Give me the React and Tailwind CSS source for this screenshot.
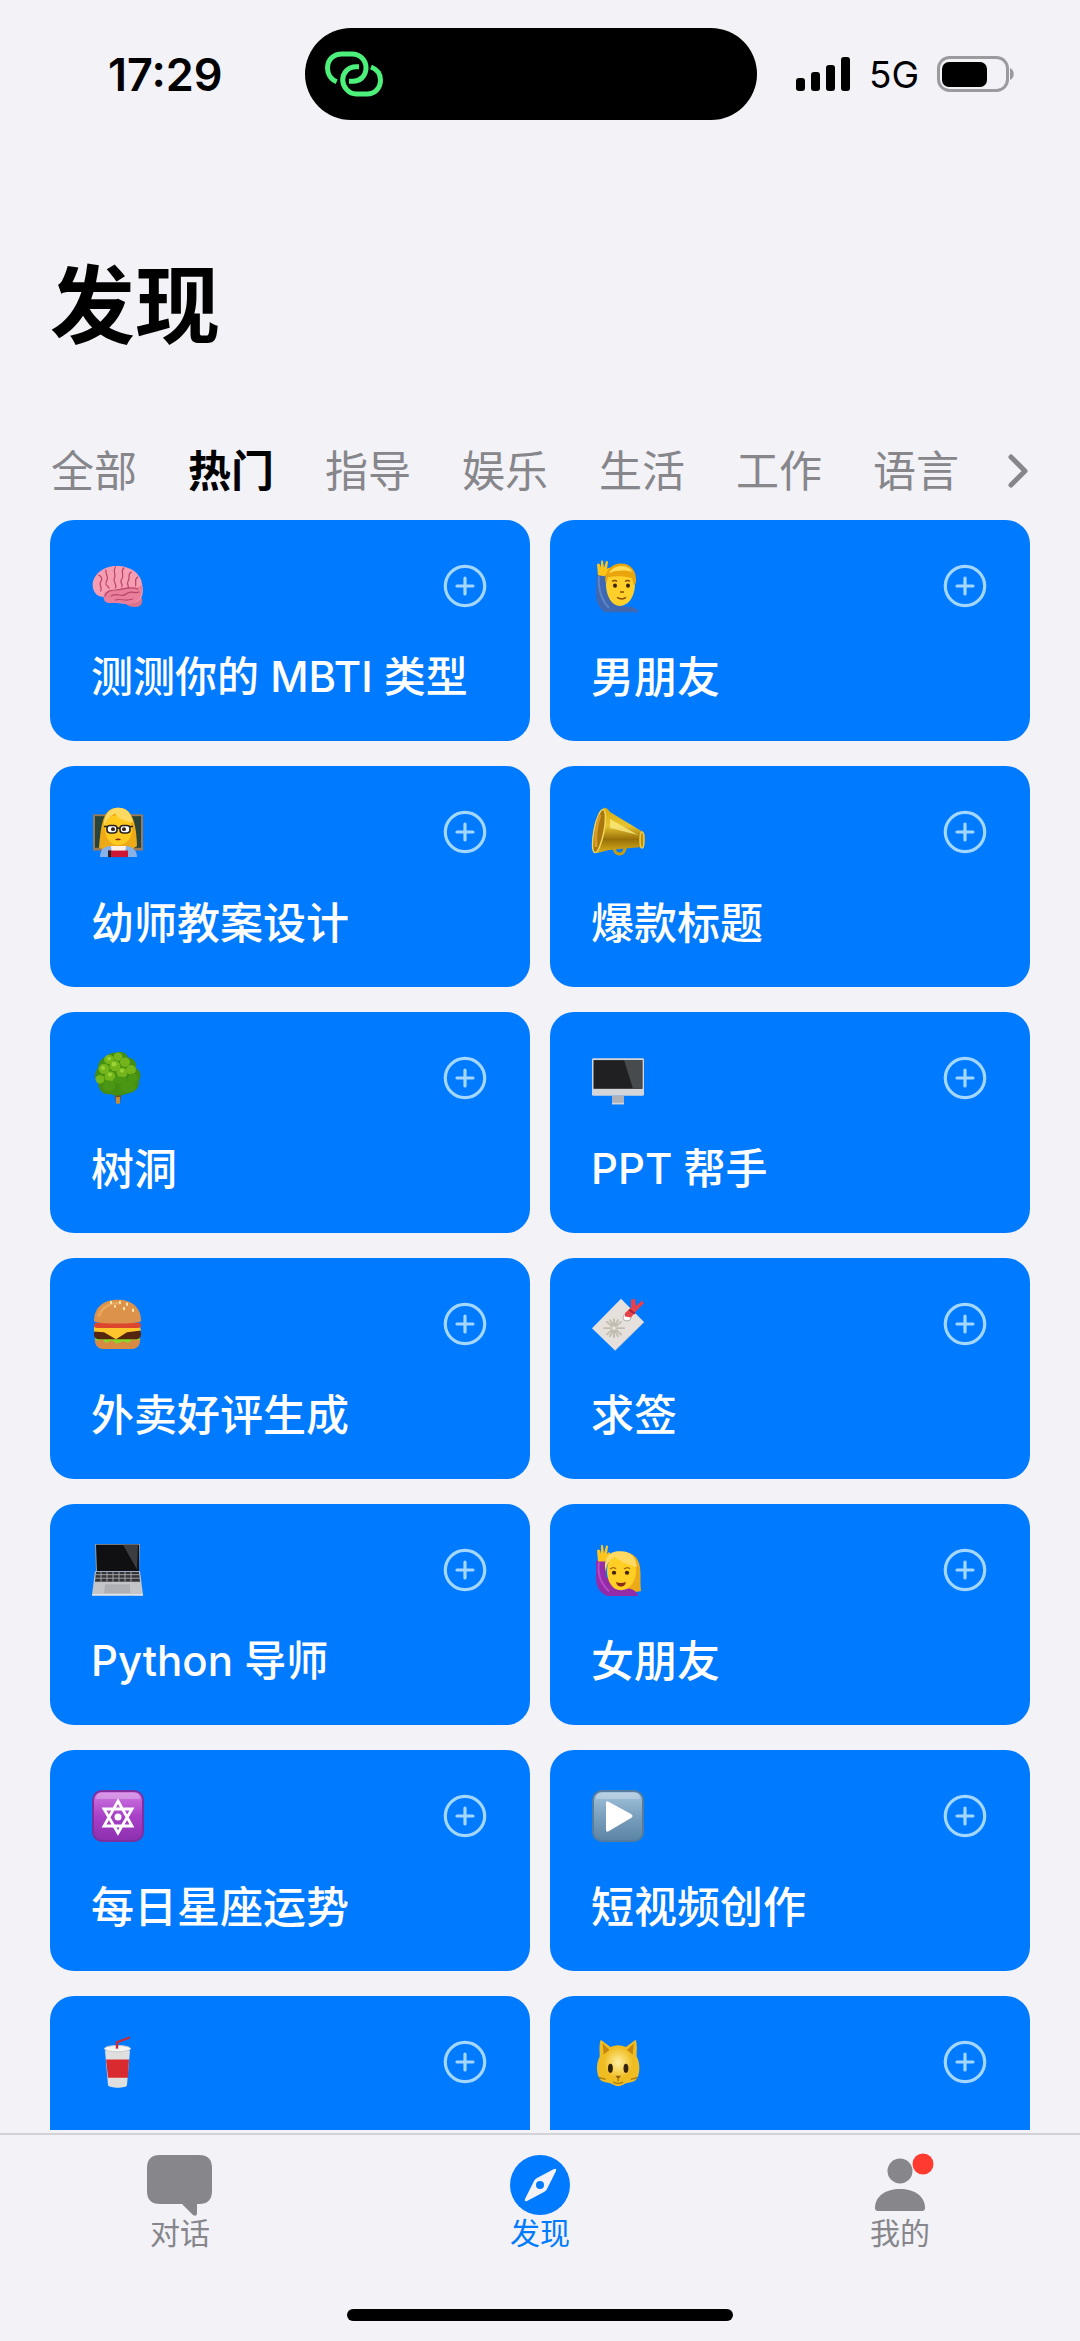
const FONT = 'font-["Inter","Noto_Sans_CJK_SC",sans-serif]';

function Brain() {
  return (
    <g transform="translate(-1 4) scale(1.06 1)">
      <path d="M33 40c2 3 6 4 10 4 5 0 7-4 6-9l-12-2z" fill="#d9748c" />
      <path d="M3 25C1 14 11 4 25 3c15-1 27 7 28 19 2 9-1 17-9 18-8 2-17-1-22 0-5 0-8-3-8-6C8 34 4 30 3 25z" fill="#f79db2" transform="translate(0 0) scale(.93 1)" />
      <path d="M13 35c-1-6 3-8 8-8 9-1 15-4 23-2l5-3c1 10-2 16-8 18-8 2-16-1-21 0-5 0-7-2-7-5z" fill="#e97f9b" />
      <g fill="none" stroke="#b9486b" strokeWidth="1.2" strokeLinecap="round">
        <path d="M8 12c3 1 4 4 2 7s2 5 0 9M15 7c-1 4 3 6 1 10s-1 5 2 8M24 4c-3 4 1 7-1 11s3 6 1 10M32 5c-4 3 1 7-2 11s2 5 0 8M39 9c-4 2-1 6-3 9s1 4 0 7M45 14c-4 3-1 5-2 9M14 33c2-5 5-6 11-6 8-1 13-4 20-1M20 33c6-4 10 2 14-2s9 0 12-2M24 37c5-2 9 2 16-1" />
      </g>
    </g>
  );
}

function Man() {
  return (
    <g transform="translate(0 -4) scale(1 1.06)">
      <path d="M6 17h8l1 17 12 14 14 1c4 1 6 3 7 5H14C7 50 4 42 5 33z" fill="#3f68b0" />
      <path d="M8 20c-1 12 2 22 10 30" stroke="#5c84c9" strokeWidth="2" fill="none" />
      <path d="M7 19L6 9q1-2 3 0l1 3V6q1-2 2 0l1 6 2-6q2-1 2 1l-1 6 2-1q2 0 1 2l-5 6z" fill="#fcc419" />
      <path d="M15 28c0-11 5-17 14-17s15 6 15 16c0 10-5 21-15 21-9 0-14-11-14-20z" fill="#ffcf2a" />
      <path d="M15 27c-3-9 4-19 15-19 10 0 16 7 15 18l-2 3-2-7c-9-3-18-2-24-1z" fill="#e9a50b" />
      <path d="M18 17c5-8 18-9 24-1-7-2-16-2-24 1z" fill="#ffdc58" />
      <circle cx="24" cy="29" r="2" fill="#3c2415" /><circle cx="37" cy="29" r="2" fill="#3c2415" />
      <path d="M21 25q3-2 5 0M34 25q3-2 5 0M29 35h4M26 40q5 3 9 0" stroke="#8a4b0c" strokeWidth="1.4" fill="none" />
    </g>
  );
}

function Teacher() {
  return (
    <g transform="scale(1 .93)">
      <rect x="2" y="10" width="50" height="39" fill="#9a7958" />
      <rect x="4" y="12" width="46" height="34" fill="#29443a" />
      <path d="M8 46C10 20 12 3 27 3s18 17 19 41l-6 4H14z" fill="#edaa16" />
      <path d="M9 56c0-8 4-12 11-12h14c8 0 12 5 12 12z" fill="#86b2e8" />
      <path d="M20 44h15l-1 7H21z" fill="#fff0e5" />
      <path d="M14 25c0-9 5-14 13-14s14 6 14 15c0 10-6 17-14 17S14 35 14 25z" fill="#ffc91f" />
      <path d="M13 26c1-10 7-14 11-17 4 7 10 8 18 10C40 7 34 2 26 3 16 4 12 14 13 26z" fill="#ffda62" />
      <g fill="#fff" stroke="#272124" strokeWidth="1.6"><rect x="16" y="22" width="10" height="8" rx="3" /><rect x="29" y="22" width="10" height="8" rx="3" /><path d="M26 25h3M13 23h3M39 23h3" /></g>
      <circle cx="22" cy="26" r="2" fill="#372315" /><circle cx="33" cy="26" r="2" fill="#372315" />
      <path d="M24 37q3-2 6 0-3 2-6 0z" fill="#82251d" />
      <path d="M17 49h20v7H17z" fill="#cf1836" /><path d="M17 49h3v7h-3z" fill="#262226" />
    </g>
  );
}

function Megaphone() {
  return (
    <g>
      <path d="M23 42c0 10 12 9 11-1" fill="none" stroke="#c79d0d" strokeWidth="3" />
      <path d="M13 3c2-1 4 1 6 4l33 20c3 2 2 14-1 15l-33 3-12 3C-1 47 1 10 13 3z" fill="url(#brass)" />
      <ellipse cx="8" cy="26" rx="5" ry="22" transform="rotate(11 8 26)" fill="#aa760e" stroke="#f1d65b" strokeWidth="1.5" />
      <path d="M9 10C6 18 4 30 5 42" stroke="#d89c2b" strokeWidth="3" fill="none" />
      <ellipse cx="51" cy="35" rx="2" ry="8" fill="#bd8e10" stroke="#edd04d" strokeWidth="1.5" />
      <path d="M19 14l28 16-28-7z" fill="#fff18a" opacity=".7" />
    </g>
  );
}

function Tree() {
  return (
    <g transform="scale(1 .94)">
      <path d="M23 42h8l-2 13h-4z" fill="#735019" /><path d="M25 49h4v7h-4z" fill="#c98c36" />
      <path d="M27 1c6-1 9 3 10 6 7 1 9 7 8 11 6 4 5 10 3 13 1 8-4 13-11 14-5 3-13 3-17 1-8 1-13-5-13-12-5-5-3-13 0-16 0-7 4-11 9-12 2-4 6-5 11-4z" fill="#438d13" />
      <g fill="#74b51c"><circle cx="27" cy="6" r="4.5" /><circle cx="18" cy="9" r="5" /><circle cx="34" cy="12" r="5" /><circle cx="24" cy="16" r="5.5" /><circle cx="13" cy="19" r="5.5" /><circle cx="40" cy="20" r="5" /><circle cx="31" cy="23" r="5.5" /><circle cx="19" cy="27" r="5.5" /><circle cx="9" cy="30" r="4.5" /></g>
      <g fill="#4b9714"><circle cx="42" cy="29" r="5" /><ellipse cx="29" cy="31" rx="7" ry="4" /><circle cx="18" cy="37" r="6" /><ellipse cx="37" cy="38" rx="8" ry="6" /></g>
      <g fill="#9bd336"><circle cx="18" cy="8" r="2" /><circle cx="23" cy="14" r="2.5" /><circle cx="12" cy="18" r="2" /><circle cx="31" cy="21" r="2" /><circle cx="19" cy="25" r="2" /></g>
    </g>
  );
}

function Monitor() {
  return (
    <g transform="translate(0 3) scale(1 .87)">
      <rect x="1" y="5" width="52" height="43" rx="1.5" fill="#d4d5d9" />
      <rect x="2.5" y="7" width="49" height="33" fill="#202022" />
      <path d="M33 7h18v33h-9z" fill="#484b4d" />
      <path d="M21 48h12v9H21z" fill="#aeb1ba" /><path d="M21 56h12v2H21z" fill="#d4d5d9" />
    </g>
  );
}

function Burger() {
  return (
    <g transform="translate(0 1) scale(1 .88)">
      <path d="M4 45h45c1 7-2 13-8 13H12c-6 0-9-6-8-13z" fill="#d88a43" />
      <path d="M3 43l3 6 5-2 4 4 6-3 5 4 6-3 5 2 5-4 6 1 2-7z" fill="#86d726" />
      <rect x="3" y="35" width="47" height="12" rx="5" fill="#54250f" />
      <path d="M3 33l46 0 1 4-14 2-11 8-12-8-10-1z" fill="#ffc52c" />
      <rect x="3" y="28" width="47" height="6" rx="3" fill="#dc452e" />
      <path d="M3 26C3 10 13 2 27 2s23 9 23 24c0 4-47 4-47 0z" fill="#dc924a" />
      <path d="M8 20C11 10 20 5 28 6" stroke="#e8a75f" strokeWidth="3" strokeLinecap="round" fill="none" />
      <path d="M20 4v2M29 4v2M36 6v2M33 11v2M42 13v2M24 9v1" stroke="#ffe6a8" strokeWidth="2" strokeLinecap="round" />
    </g>
  );
}

function Bookmark() {
  return (
    <g transform="scale(1 .89)">
      <path d="M30 2l23 26-29 32L1 35z" fill="#e5e0db" />
      <path d="M53 28L24 60" fill="none" stroke="#c9c6c2" />
      <g stroke="#c2bdb3" strokeWidth="2" strokeLinecap="round"><path d="M23 25v7M23 38v7M13 35h7M26 35h7M16 28l5 5M25 37l5 5M30 28l-5 5M21 37l-5 5M19 26l3 6M24 38l3 6M27 26l-3 6M22 38l-3 6" /></g>
      <circle cx="36" cy="23" r="4" fill="#fff" stroke="#aaa" />
      <path d="M34 18l6-6 0-9 4-1 1 8 6-6 2 3-8 9-5 7-6-1z" fill="#e94149" />
      <path d="M38 14l6 5" stroke="#a91f35" strokeWidth="2" />
    </g>
  );
}

function Laptop() {
  return (
    <g transform="scale(1 .88)">
      <path d="M4 1h45l-1 31H5z" fill="#9a9ca0" />
      <path d="M5 2h43v30H6z" fill="#101012" /><path d="M32 2h15l-1 28z" fill="#3c3d40" />
      <path d="M4 32h45l3 27H1z" fill="#c4c5c9" />
      <path d="M5 33h43l1 11H4z" fill="#343437" />
      <path d="M5 36h43M4 40h45M10 33v11M16 33v11M22 33v11M28 33v11M34 33v11M40 33v11" stroke="#a8a9ae" strokeWidth="1" />
      <path d="M14 47h25v10H13z" fill="#aeb0b5" /><path d="M1 58h51v2H1z" fill="#e4e4e7" />
    </g>
  );
}

function Woman() {
  return (
    <g transform="translate(0 -1) scale(1 .93)">
      <path d="M19 30C13 9 46 2 49 27c1 8 0 18 1 26l-19 2z" fill="#edaa18" />
      <path d="M5 20h9l1 17 11 13h12c5 1 8 4 9 8H16C7 54 4 45 5 35z" fill="#942caa" />
      <path d="M8 22c-2 14 2 23 10 31" stroke="#b64ac8" strokeWidth="2" fill="none" />
      <path d="M7 21L6 9q1-2 3 0l1 4V4q1-2 2 0l1 8 2-8q2-1 2 1l-1 8 2-2q2 0 1 3l-5 7z" fill="#ffc41d" />
      <path d="M16 31c0-12 6-17 14-17s15 6 15 17-6 21-15 21-14-10-14-21z" fill="#ffcf24" />
      <path d="M15 32c0-9 4-13 9-16 8 7 14 8 22 11-1-12-8-18-18-17C16 10 12 21 15 32z" fill="#ffda62" />
      <circle cx="23" cy="33" r="2.2" fill="#45260e" /><circle cx="36" cy="33" r="2.2" fill="#45260e" />
      <path d="M19 29q4-3 6 0M33 29q4-3 6 0" stroke="#a36514" strokeWidth="1.4" fill="none" />
      <path d="M25 43q5 2 10 0-1 5-5 5t-5-5z" fill="#8b291a" />
    </g>
  );
}

function Star() {
  return (
    <g>
      <rect x="2" y="2" width="50" height="50" rx="9" fill="url(#violet)" stroke="#7d2fa0" strokeWidth="2" />
      <path d="M5 10c0-4 2-6 6-6h32c4 0 6 2 6 6z" fill="#fff" opacity=".25" />
      <path d="M27 12l14 25H13zM27 44L13 20h28z" fill="none" stroke="#fff" strokeWidth="2.8" />
      <circle cx="27" cy="28" r="3.5" fill="#fff" />
    </g>
  );
}

function Play() {
  return (
    <g>
      <rect x="2" y="2" width="50" height="50" rx="9" fill="url(#steel)" stroke="#557c9d" strokeWidth="2" />
      <path d="M5 10c0-4 2-6 6-6h32c4 0 6 2 6 6z" fill="#fff" opacity=".25" />
      <path d="M15 14q0-3 3-1l22 12q3 2 0 4L18 42q-3 2-3-1z" fill="#fff" />
    </g>
  );
}

function Cup() {
  return (
    <g transform="scale(1 .91)">
      <path d="M26 16V8l12-5" fill="none" stroke="#c52b3c" strokeWidth="2.5" strokeLinecap="round" />
      <path d="M14 17h25l-3 38c0 4-18 4-19 0z" fill="#dfdfdf" />
      <path d="M15 27h23l-1 20H17z" fill="#d92b2f" />
      <ellipse cx="26.5" cy="15" rx="13" ry="3.5" fill="#f5f5f3" stroke="#c9c9c9" />
      <path d="M26 15v-4" stroke="#c52b3c" strokeWidth="2.5" />
    </g>
  );
}

function Cat() {
  return (
    <g transform="translate(1 2) scale(.97 .92)">
      <path d="M9 3l10 8q8-4 16 0l10-8c2 6 1 13 1 18 4 8 4 20-1 26-4 3-9 2-13 5q-5 3-10 0c-4-3-9-2-13-5-5-6-5-18-1-26 0-5-1-12 1-18z" fill="#efbd22" />
      <path d="M11 7l7 7-6 5zM43 7l-7 7 6 5z" fill="#c48610" />
      <ellipse cx="27" cy="28" rx="15" ry="17" fill="url(#fur)" />
      <ellipse cx="19" cy="34" rx="2.5" ry="5" fill="#33220d" /><ellipse cx="35" cy="34" rx="2.5" ry="5" fill="#33220d" />
      <path d="M24 42h6l-3 4z" fill="#936013" /><path d="M27 45v3M22 49q5 3 10 0M7 44l7 2M47 44l-7 2" stroke="#af7810" strokeWidth="1.5" fill="none" />
    </g>
  );
}

const cards = [
  { title: "测测你的 MBTI 类型", Art: Brain },
  { title: "男朋友", Art: Man },
  { title: "幼师教案设计", Art: Teacher },
  { title: "爆款标题", Art: Megaphone },
  { title: "树洞", Art: Tree },
  { title: "PPT 帮手", Art: Monitor },
  { title: "外卖好评生成", Art: Burger },
  { title: "求签", Art: Bookmark },
  { title: "Python 导师", Art: Laptop },
  { title: "女朋友", Art: Woman },
  { title: "每日星座运势", Art: Star },
  { title: "短视频创作", Art: Play },
  { title: "", Art: Cup },
  { title: "", Art: Cat },
];

const tabs = ["全部", "热门", "指导", "娱乐", "生活", "工作", "语言"];

function Card({ title, Art }) {
  const mixed = /[A-Z]/.test(title);
  return (
    <article className="flex min-h-[221px] flex-col justify-between rounded-3xl bg-[#007aff] pt-9 pr-[43px] pb-[34px] pl-[41px] text-white">
      <div className="flex items-center justify-between">
        <svg className="h-[60px] w-14" viewBox="0 -3 56 60" aria-hidden="true"><Art /></svg>
        <button type="button" aria-label={`添加${title}`} className="h-11 w-11">
          <svg viewBox="0 0 44 44" className="h-11 w-11" fill="none" stroke="#a3d7ff" strokeWidth="3.2" strokeLinecap="round" aria-hidden="true">
            <circle cx="22" cy="22" r="19.7" />
            <path d="M22 14v16M14 22h16" />
          </svg>
        </button>
      </div>
      {title && <h2 className={mixed ? "text-[42px] leading-[60px] font-medium whitespace-nowrap" : "text-[43px] leading-[60px] font-medium whitespace-nowrap"}>{title}</h2>}
    </article>
  );
}

function StatusBar() {
  return (
    <header className="flex h-[148px] items-start pt-7 pr-[65px] pl-[63px]">
      <div className="flex h-[92px] w-[242px] shrink-0 items-center pl-[45px] text-[45px] leading-none font-semibold">17:29</div>
      <div className="flex h-[92px] w-[452px] items-center rounded-full bg-black pl-5">
        <svg className="h-[46px] w-[58px]" viewBox="0 0 58 46" fill="none" stroke="#4cf07a" strokeWidth="5" role="img" aria-label="个人热点">
          <path d="M11.7 30.7C5 28 2.5 22 2.5 17 2.5 8 9 3 17 3H27C35 3 41 9 41 17S35 30.300 28 30.300H24" />
          <path d="M34 15.700H31C23 15.700 17.700 22 17.700 29S24 43 31 43H42C50 43 55.500 37 55.500 29 55.500 22 51 18 46 16" />
        </svg>
      </div>
      <div className="flex h-[92px] flex-1 items-center justify-end">
        <svg className="h-9 w-[55px]" viewBox="0 0 55 36" role="img" aria-label="信号"><rect y="22" width="9" height="13" rx="3" /><rect x="15" y="16" width="9" height="19" rx="3" /><rect x="30" y="9" width="9" height="26" rx="3" /><rect x="45" y="1" width="9" height="34" rx="3" /></svg>
        <span className="mr-[18px] ml-[18px] text-[37px] leading-none">5G</span>
        <svg className="h-9 w-[78px]" viewBox="0 0 78 36" role="img" aria-label="电量"><rect x="1.5" y="1.5" width="69" height="33" rx="11" fill="none" stroke="#9b9b9f" strokeWidth="3" /><rect x="5" y="6" width="45" height="25" rx="7" /><path d="M73 12c5 2 5 10 0 12z" fill="#9b9b9f" /></svg>
      </div>
    </header>
  );
}

function NavItem({ label, active, children }) {
  return (
    <a href="#" aria-current={active ? "page" : undefined} className={active ? "flex flex-1 flex-col items-center text-[#007aff]" : "flex flex-1 flex-col items-center text-[#86868b]"}>
      <svg className="h-16 w-20" viewBox="0 0 80 64" fill="currentColor" aria-hidden="true">{children}</svg>
      <span className="text-[30px] leading-8">{label}</span>
    </a>
  );
}

export default function App() {
  return (
    <div className={`flex h-screen flex-col overflow-hidden bg-[#f2f2f7] text-black ${FONT}`}>
      <svg className="absolute h-0 w-0" aria-hidden="true"><defs>
        <linearGradient id="brass" x2="0" y2="1"><stop stopColor="#d8a90c" /><stop offset=".4" stopColor="#e6c430" /><stop offset=".7" stopColor="#987009" /><stop offset="1" stopColor="#d8b01c" /></linearGradient>
        <linearGradient id="violet" x2="0" y2="1"><stop stopColor="#cf7ce2" /><stop offset=".5" stopColor="#a941c8" /><stop offset="1" stopColor="#8c2fae" /></linearGradient>
        <linearGradient id="steel" x2="0" y2="1"><stop stopColor="#a4c4dc" /><stop offset=".5" stopColor="#7aa0be" /><stop offset="1" stopColor="#5b83a3" /></linearGradient>
        <radialGradient id="fur"><stop stopColor="#fff0a0" /><stop offset="1" stopColor="#efbd22" /></radialGradient>
      </defs></svg>
      <StatusBar />
      <h1 className="mt-[99px] px-[50px] text-[85px] leading-[120px] font-bold">发现</h1>
      <nav className="mt-[69px] flex h-[84px] items-start justify-between pr-[50px] pl-[51px]" aria-label="分类">
        <div className="flex gap-[51px]">
          {tabs.map((t) => (
            <button key={t} type="button" className={t === "热门" ? "text-[43px] leading-[70px] font-bold whitespace-nowrap" : "text-[43px] leading-[70px] whitespace-nowrap text-[#86868b]"}>{t}</button>
          ))}
        </div>
        <button type="button" aria-label="更多分类" className="flex h-[70px] items-center">
          <svg className="h-9 w-6" viewBox="0 0 24 36" fill="none" stroke="#86868b" strokeWidth="5" strokeLinecap="round" strokeLinejoin="round"><path d="M5 4l14 14L5 32" /></svg>
        </button>
      </nav>
      <main className="grid min-h-0 flex-1 auto-rows-max grid-cols-2 gap-x-5 gap-y-[25px] overflow-hidden px-[50px]">
        {cards.map((c, i) => <Card key={i} {...c} />)}
      </main>
      <footer className="mt-[3px] flex h-[208px] shrink-0 flex-col items-center justify-between border-t-2 border-[#d1d1d6] pt-[18px] pb-5">
        <nav className="flex w-full" aria-label="主导航">
          <NavItem label="对话"><path d="M20 2h39q13 0 13 13v23q0 13-13 13h-2v9q0 4-4 2L42 51H20Q7 51 7 38V15Q7 2 20 2z" /></NavItem>
          <NavItem label="发现" active>
            <circle cx="40" cy="32" r="30" />
            <path d="M54 16q3-1 2 2l-9 18q-1 2-3 3l-17 9q-3 1-2-2l9-18q1-2 3-3z" fill="#f2f2f7" />
            <circle cx="40" cy="32" r="4" />
          </NavItem>
          <NavItem label="我的">
            <circle cx="40" cy="18" r="12.5" />
            <path d="M15 55c0-12 11-19 25-19s25 7 25 19q0 3-3 3H18q-3 0-3-3z" />
            <circle cx="63" cy="11" r="10.500" fill="#ff3b30" />
          </NavItem>
        </nav>
        <div className="h-3 w-[386px] rounded-full bg-black" />
      </footer>
    </div>
  );
}
